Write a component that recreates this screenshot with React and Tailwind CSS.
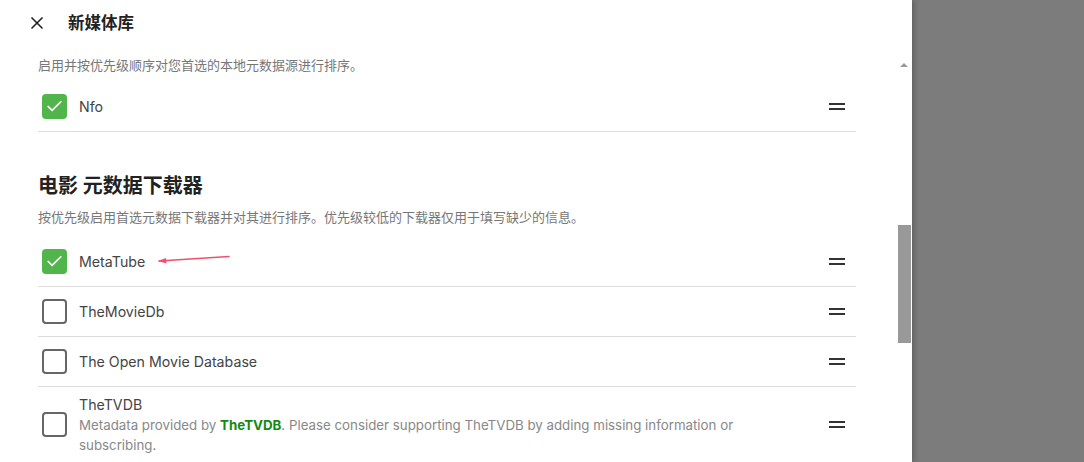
import React from "react";
import { X, Check } from "lucide-react";

const font = { fontFamily: "Inter, 'Noto Sans CJK SC', sans-serif" };

function Handle() {
  return (
    <div className="flex flex-col gap-[3px] w-[16px] mr-[11px]">
      <div className="h-[2px] bg-[#333]" />
      <div className="h-[2px] bg-[#333]" />
    </div>
  );
}

function Box({ checked }) {
  return checked ? (
    <div className="w-[25px] h-[25px] rounded-[4px] bg-[#52b54b] flex items-center justify-center shrink-0">
      <Check size={19} strokeWidth={2.2} className="text-white" />
    </div>
  ) : (
    <div className="w-[25px] h-[25px] rounded-[4px] border-2 border-[#666] shrink-0" />
  );
}

function Row({ label, checked, children, tall }) {
  return (
    <div
      className={`flex items-center border-b border-[#ddd] ${
        tall ? "h-[76px]" : "h-[50px]"
      }`}
    >
      <div className="pl-[4px] flex items-center">
        <Box checked={checked} />
      </div>
      <div className="flex-1 pl-[12px] flex items-center">
        {tall ? (
          <div className="w-[720px]">
            <div className="text-[14.2px] text-[#444] leading-[20px]">{label}</div>
            {children}
          </div>
        ) : (
          <span className="text-[14.2px] text-[#444]">{label}</span>
        )}
        {!tall && children}
      </div>
      <Handle />
    </div>
  );
}

export default function App() {
  return (
    <div className="w-[1084px] h-[462px] flex overflow-hidden bg-[#7c7c7c]" style={font}>
      <div className="w-[912px] h-full bg-white flex flex-col shadow-[2px_0_6px_rgba(0,0,0,0.25)] z-10">
        {/* Header */}
        <div className="h-[46px] flex items-center shrink-0">
          <X size={20} strokeWidth={2} className="ml-[27px] text-[#222]" />
          <h1 className="ml-[21px] text-[16.5px] font-bold text-[#222]">新媒体库</h1>
        </div>

        <div className="flex flex-1 min-h-0">
          {/* Scroll content */}
          <div className="flex-1 pl-[38px] pr-[39px] overflow-hidden">
            <p className="text-[13px] text-[#777] mt-[10px] leading-[18px]">
              启用并按优先级顺序对您首选的本地元数据源进行排序。
            </p>
            <div className="mt-[8px]">
              <Row label="Nfo" checked />
            </div>

            <h2 className="mt-[40px] text-[20px] font-bold text-[#222] leading-[28px]">
              电影 元数据下载器
            </h2>
            <p className="text-[13px] text-[#777] mt-[8px] leading-[18px]">
              按优先级启用首选元数据下载器并对其进行排序。优先级较低的下载器仅用于填写缺少的信息。
            </p>
            <div className="mt-[11px]">
              <Row label="MetaTube" checked>
                <svg width="80" height="14" viewBox="0 0 80 14" className="ml-[12px]">
                  <path d="M2 7 L72 2.5" stroke="#f0506e" strokeWidth="1.6" strokeLinecap="round" />
                  <path d="M1 7 L9 4 L9.5 9.5 Z" fill="#f0506e" />
                </svg>
              </Row>
              <Row label="TheMovieDb" />
              <Row label="The Open Movie Database" />
              <Row label="TheTVDB" tall>
                <div className="text-[13.3px] text-[#888] leading-[20px]">
                  Metadata provided by{" "}
                  <span className="font-bold text-[#138a13]">TheTVDB</span>. Please
                  consider supporting TheTVDB by adding missing information or
                  subscribing.
                </div>
              </Row>
            </div>
          </div>

          {/* Scrollbar */}
          <div className="w-[17px] flex flex-col items-center shrink-0">
            <div className="mt-[17px] w-0 h-0 border-l-[4px] border-r-[4px] border-b-[4px] border-l-transparent border-r-transparent border-b-[#999]" />
            <div className="mt-[158px] w-[13px] h-[118px] bg-[#999] ml-[1px]" />
          </div>
        </div>
      </div>
      <div className="flex-1" />
    </div>
  );
}
